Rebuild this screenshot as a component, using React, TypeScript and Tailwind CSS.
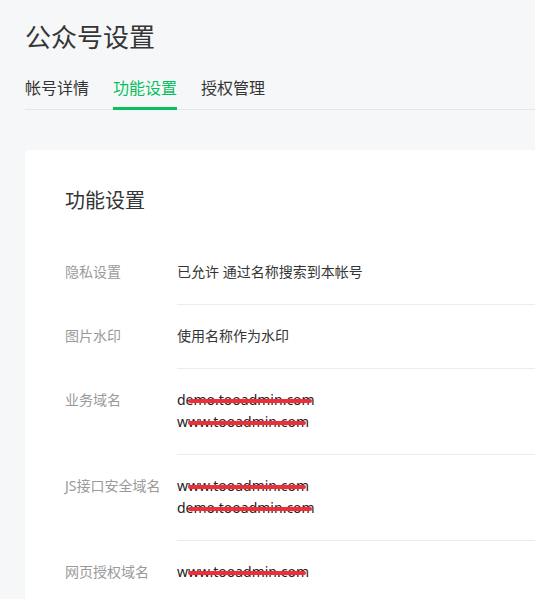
const tabs = ['帐号详情', '功能设置', '授权管理'];

type Row = { label: string; values: string[]; domain?: boolean };

const rows: Row[] = [
  { label: '隐私设置', values: ['已允许 通过名称搜索到本帐号'] },
  { label: '图片水印', values: ['使用名称作为水印'] },
  { label: '业务域名', values: ['demo.tooadmin.com', 'www.tooadmin.com'], domain: true },
  { label: 'JS接口安全域名', values: ['www.tooadmin.com', 'demo.tooadmin.com'], domain: true },
  { label: '网页授权域名', values: ['www.tooadmin.com'], domain: true },
];

// hand-drawn red marker stroke over a domain name
const Scribble = () => (
  <span className="pointer-events-none absolute top-[10px] left-[11px] right-[3px] h-[4px] rounded-full bg-[#ef2f38]" />
);

const Domain = ({ text }: { text: string }) => (
  <div className="relative w-fit text-[#222]">
    {text}
    <Scribble />
  </div>
);

export default function App() {
  return (
    <div
      className="min-h-[599px] overflow-hidden bg-[#f6f7f9] pl-[25px] pt-[20px] text-[#353535]"
      style={{ fontFamily: '"Noto Sans", "Noto Sans CJK SC", sans-serif' }}
    >
      <h1 className="text-[26px] leading-[34px] font-normal">公众号设置</h1>

      <div className="mt-[22px] flex gap-6 border-b border-[#e4e6ea]">
        {tabs.map((t) => (
          <div
            key={t}
            className={`-mb-px pb-[7px] text-[16px] leading-6 border-b-[3px] ${
              t === '功能设置' ? 'border-[#07c160] text-[#07c160]' : 'border-transparent text-[#353535]'
            }`}
          >
            {t}
          </div>
        ))}
      </div>

      <div className="mt-[40px] rounded-tl-[4px] bg-white pl-10 pt-[37px]">
        <h2 className="text-[20px] leading-7 font-normal">功能设置</h2>

        <div className="mt-[26px]">
          {rows.map((r, i) => (
            <div key={r.label} className="flex text-[14px] leading-[22px]">
              <div className="w-[112px] shrink-0 pt-5 text-[#9a9a9a]">{r.label}</div>
              <div
                className={`flex-1 pt-5 pb-[21px] ${i < rows.length - 1 ? 'border-b border-[#ececec]' : ''}`}
              >
                {r.values.map((v) =>
                  r.domain ? <Domain key={v} text={v} /> : <div key={v}>{v}</div>
                )}
              </div>
            </div>
          ))}
        </div>
      </div>
    </div>
  );
}
